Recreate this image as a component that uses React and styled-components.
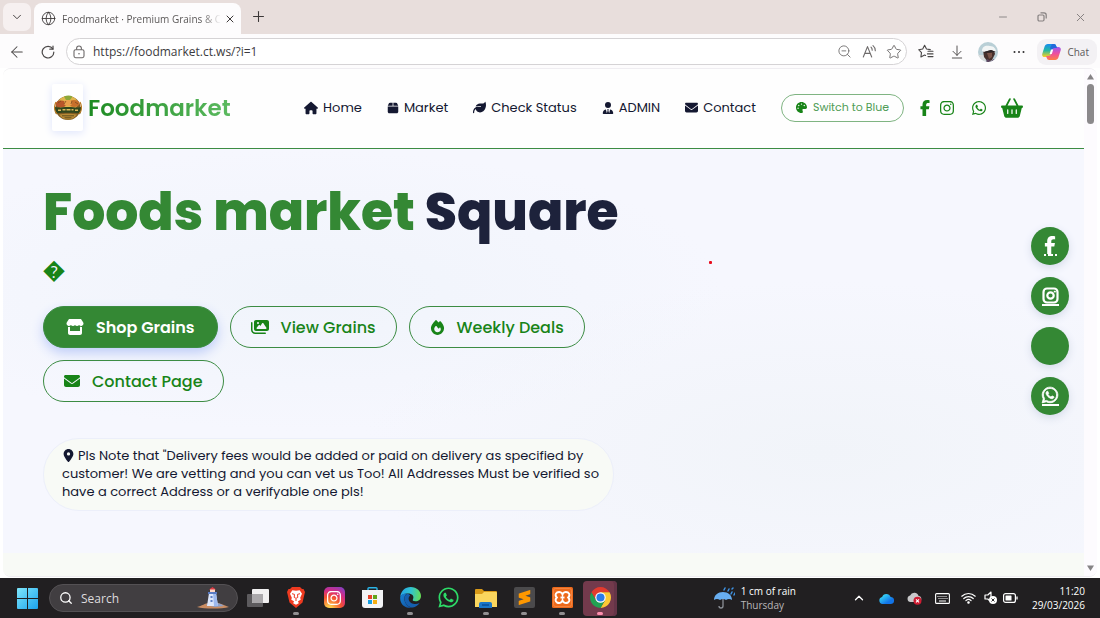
import React from "react";
import styled, { createGlobalStyle, css } from "styled-components";
import {
  FaHouse, FaBox, FaLeaf, FaUserTie, FaEnvelope, FaPalette, FaFacebookF, FaInstagram,
  FaWhatsapp, FaBasketShopping, FaStore, FaImages, FaFire, FaLocationDot,
} from "react-icons/fa6";
import { SiSublimetext } from "react-icons/si";
import { ArrowLeft, ChevronDown, ChevronUp, Globe, Minus, Plus, Star, X, ZoomOut, ArrowDownToLine, Search } from "lucide-react";

const green = "#348834";
const deepGreen = "#188418";
const ink = "#141831";
const siteFont = `Poppins, Inter, "Noto Sans", sans-serif`;
const systemFont = `"Segoe UI", "Open Sans", "Noto Sans", sans-serif`;

const GlobalStyle = createGlobalStyle`
  *, *::before, *::after { box-sizing: border-box; }
  body { margin: 0; background: #fff; font-family: ${systemFont}; }
  button, input { font: inherit; color: inherit; }
  button { border: 0; padding: 0; background: none; cursor: pointer; }
  a { color: inherit; text-decoration: none; }
  svg { display: block; flex: none; }
`;

const Desktop = styled.div`
  min-height: 100vh;
  display: flex;
  flex-direction: column;
`;

/* ---------- browser window ---------- */

const TabStrip = styled.header`
  height: 34px;
  display: flex;
  align-items: flex-end;
  background: #e8dedc;
  padding: 0 0 0 3px;
  color: #3c3838;
`;

const TabSearch = styled.button`
  width: 28px;
  height: 28px;
  margin-bottom: 3px;
  display: grid;
  place-items: center;
  border-radius: 7px;
  background: #f6f0f0;
`;

const Tab = styled.div`
  width: 207px;
  height: 31px;
  margin-left: 3px;
  padding: 0 8px 0 7px;
  display: flex;
  align-items: center;
  border-radius: 8px 8px 0 0;
  background: #fdfcfd;
`;

const TabTitle = styled.span`
  flex: 1;
  margin: 0 3px 0 6px;
  white-space: nowrap;
  font-size: 10px;
  line-height: 16px;
  color: #5c5959;
  mask-image: linear-gradient(90deg, #000 88%, transparent);
`;

const NewTab = styled.button`
  margin: 0 auto 9px 9px;
`;

const WindowControls = styled.div`
  display: flex;
  margin-bottom: 4px;
`;

const WindowButton = styled.button`
  width: 39px;
  height: 26px;
  display: grid;
  place-items: center;
  color: #858080;
`;

const Toolbar = styled.div`
  height: 34px;
  display: flex;
  align-items: center;
  padding: 1px 3px 0 5px;
  background: #fdfcfd;
  color: #4a4747;
`;

const ToolButton = styled.button`
  width: ${(p) => p.$w || 31}px;
  height: 26px;
  display: grid;
  place-items: center;
`;

const AddressField = styled.label`
  flex: 1;
  height: 27px;
  margin-right: 3px;
  padding: 0 0 0 5px;
  display: flex;
  align-items: center;
  border: 1px solid #d5d3d5;
  border-radius: 14px;
  background: #fff;
  color: #6d6a6a;
`;

const UrlInput = styled.input`
  flex: 1;
  min-width: 0;
  margin-left: 7px;
  padding: 0;
  border: 0;
  outline: 0;
  background: none;
  font-size: 12px;
  color: #3c3b40;
`;

const ChatButton = styled.button`
  height: 26px;
  margin-left: 3px;
  padding: 0 8px 0 5px;
  display: flex;
  align-items: center;
  gap: 6px;
  border-radius: 9px;
  background: #f3f1f4;
  font-size: 10px;
  color: #5b585b;
`;

const Viewport = styled.div`
  flex: 1;
  display: flex;
  margin: 0 3px 1px;
  border: solid #efedf1;
  border-width: 1px 0;
  border-radius: 8px;
  overflow: hidden;
  position: relative;
`;

const Page = styled.div`
  flex: 1;
  min-width: 0;
  display: flex;
  flex-direction: column;
  background: #f8faf6;
  font-family: ${siteFont};
`;

const Scrollbar = styled.div`
  width: 13px;
  padding: 5px 0;
  display: flex;
  flex-direction: column;
  align-items: center;
  background: #fdfbfe;
`;

const Thumb = styled.div`
  width: 7px;
  height: 40px;
  margin: 4px 0 auto;
  border-radius: 4px;
  background: #8b898b;
`;

/* ---------- site ---------- */

const SiteHeader = styled.header`
  height: 80px;
  display: flex;
  align-items: center;
  padding: 0 61px 2px 49px;
  background: #fefefe;
  border-bottom: 1px solid #3c8c43;
`;

const Brand = styled.a`
  display: flex;
  align-items: center;
  gap: 5px;
  margin-right: auto;
`;

const LogoCard = styled.span`
  width: 31px;
  height: 47px;
  display: grid;
  place-items: center;
  border-radius: 2px;
  background: #fff;
  box-shadow: 0 2px 8px #dfe5fc;
`;

const BrandName = styled.span`
  font-size: 23px;
  line-height: 32px;
  font-weight: 600;
  color: transparent;
  background: linear-gradient(90deg, #1d8a22, #5cba60);
  background-clip: text;
`;

const Nav = styled.nav`
  display: flex;
  gap: 25px;
  margin-right: 25px;
`;

const NavLink = styled.a`
  display: flex;
  align-items: center;
  gap: 5px;
  font-size: 13px;
  line-height: 20px;
  color: ${ink};
  white-space: nowrap;
`;

const ThemeButton = styled.button`
  width: 123px;
  height: 28px;
  display: flex;
  align-items: center;
  justify-content: center;
  gap: 6px;
  border: 1px solid #7fb482;
  border-radius: 14px;
  font-size: 11px;
  color: #4f9c56;
  white-space: nowrap;
  svg { color: ${deepGreen}; }
`;

const Shortcuts = styled.div`
  display: flex;
  align-items: center;
  margin-left: 13px;
  color: ${deepGreen};
`;

const ShortcutLink = styled.a`
  margin-left: ${(p) => p.$gap || 0}px;
`;

const Hero = styled.main`
  padding: 31px 40px 42px;
  background:
    radial-gradient(ellipse at 28% 35%, #f0f4fb 0, transparent 38%),
    radial-gradient(ellipse at 76% 75%, #f1f4f9 0, transparent 40%),
    #f6f7fe;
`;

const HeroColumn = styled.div`
  max-width: 571px;
`;

const Title = styled.h1`
  margin: 0;
  font-size: 52px;
  line-height: 64px;
  font-weight: 800;
  color: ${green};
  white-space: nowrap;
`;

const TitleInk = styled.span`
  color: #1d223b;
`;

const Tagline = styled.p`
  margin: 11px 0 19px;
  font-family: "Liberation Sans", sans-serif;
  font-size: 22px;
  font-weight: 700;
  line-height: 32px;
  color: ${deepGreen};
`;

const Actions = styled.div`
  display: flex;
  flex-wrap: wrap;
  gap: 12px;
`;

const ActionButton = styled.button`
  height: 42px;
  padding: 0 20px;
  display: flex;
  align-items: center;
  gap: 12px;
  border: 1px solid #3c8c43;
  border-radius: 21px;
  font-size: 16px;
  font-weight: 500;
  color: ${deepGreen};
  white-space: nowrap;
  ${(p) => p.$primary && css`
    padding: 0 22px;
    background: ${green};
    color: #fff;
    font-weight: 600;
    box-shadow: 0 5px 12px #bfcdf8;
  `}
`;

const Note = styled.p`
  margin: 36px 0 0;
  padding: 8px 18px 9px;
  border: 1px solid #eceffa;
  border-radius: 36px;
  background: #f8faf6;
  font-size: 13px;
  line-height: 18px;
  color: ${ink};
  white-space: nowrap;
  svg { display: inline-block; vertical-align: -2px; margin-right: 3px; }
`;

const SocialRail = styled.aside`
  position: absolute;
  top: 158px;
  right: 28px;
  display: flex;
  flex-direction: column;
  gap: 12px;
`;

const SocialButton = styled.a`
  width: 38px;
  height: 38px;
  display: flex;
  flex-direction: column;
  align-items: center;
  justify-content: center;
  border-radius: 50%;
  background: ${green};
  color: #fff;
  box-shadow: 0 3px 8px #d5dbea;
  &::after {
    content: "";
    width: ${(p) => (p.$empty ? 0 : p.$dotted ? 13 : 17)}px;
    height: 2px;
    background: ${(p) => (p.$dotted ? "linear-gradient(90deg, #fff 2px, transparent 2px 4px, #fff 4px 9px, transparent 9px 11px, #fff 11px)" : "#fff")};
  }
`;

const LaserDot = styled.span`
  position: absolute;
  top: 192px;
  left: 706px;
  width: 3px;
  height: 3px;
  border-radius: 1px;
  background: #e80c1c;
`;

/* ---------- taskbar ---------- */

const Taskbar = styled.footer`
  height: 40px;
  display: flex;
  align-items: center;
  padding: 0 15px 0 17px;
  background: #211f21;
  color: #fff;
`;

const SearchBox = styled.label`
  width: 189px;
  height: 28px;
  margin: 0 1px 0 11px;
  padding: 0 8px 0 9px;
  display: flex;
  align-items: center;
  gap: 8px;
  border: 1px solid #545154;
  border-radius: 14px;
  background: #413e41;
`;

const SearchInput = styled.input`
  flex: 1;
  min-width: 0;
  border: 0;
  padding: 0;
  outline: 0;
  background: none;
  font-size: 12px;
  &::placeholder { color: #dedcde; opacity: 1; }
`;

const TaskButton = styled.button`
  width: 34px;
  height: 35px;
  margin: 0 2px;
  padding-top: 3px;
  display: grid;
  grid-template-rows: 28px 3px;
  place-items: center;
  border-radius: 4px;
  background: ${(p) => (p.$active ? "#733a4c" : "none")};
  box-shadow: ${(p) => (p.$active ? "inset -3px 0 #643447" : "none")};
  &::after {
    content: "";
    width: 6px;
    height: 3px;
    border-radius: 2px;
    background: ${(p) => (p.$active ? "#ff8fae" : p.$running ? "#929092" : "transparent")};
  }
`;

const AppTile = styled.span`
  width: 21px;
  height: 21px;
  display: grid;
  place-items: center;
  border-radius: ${(p) => p.$radius || 2}px;
  background: ${(p) => p.$bg};
  color: ${(p) => p.$fg};
`;

const Weather = styled.button`
  display: flex;
  align-items: center;
  gap: 6px;
  margin: 0 49px 0 auto;
  text-align: left;
  font-size: 10px;
  line-height: 14px;
`;

const Dim = styled.span`
  color: #b9b7b9;
`;

const Tray = styled.div`
  display: flex;
  align-items: center;
`;

const TrayButton = styled.button`
  width: ${(p) => p.$w}px;
  height: 28px;
  display: grid;
  place-items: center;
`;

const Clock = styled.time`
  margin-left: 11px;
  text-align: right;
  font-size: 10px;
  line-height: 14px;
`;

/* ---------- drawings ---------- */

const ReloadIcon = () => (
  <svg width="14" height="14" viewBox="0 0 14 14" fill="none" stroke="currentColor" strokeWidth="1.2" strokeLinecap="round">
    <path d="M11.8 3.9A5.8 5.8 0 1 0 12.8 7" /><path d="M12 1v3.2H8.8" />
  </svg>
);

const LockIcon = () => (
  <svg width="14" height="14" viewBox="0 0 14 14" fill="none" stroke="currentColor" strokeWidth="1.1">
    <rect x="2" y="4.7" width="10" height="8" rx="1.6" />
    <path d="M4.6 4.7V3.4a2.4 2.4 0 0 1 4.8 0v1.3" />
    <circle cx="7" cy="8.8" r=".8" fill="currentColor" stroke="none" />
  </svg>
);

const ReadAloudIcon = () => (
  <svg width="15" height="15" viewBox="0 0 15 15" fill="none" stroke="currentColor" strokeWidth="1.1" strokeLinecap="round" strokeLinejoin="round">
    <path d="M1.3 13 5.5 2.6 9.7 13M2.8 9.4h5.4M9 3.2a4 4 0 0 1 1.2 3.1M11 1.6a6.4 6.4 0 0 1 2.3 5.2" />
  </svg>
);

const FavoritesIcon = () => (
  <svg width="16" height="15" viewBox="0 0 16 15" fill="none" stroke="currentColor" strokeWidth="1.1" strokeLinecap="round" strokeLinejoin="round">
    <path d="M12.3 5.6 8.5 5 6.6 1.3 4.7 5l-4 .7 2.8 3-.6 4.2 3.7-1.9 1 .5M10 7.2h5M9.4 9.9H15M10 12.6h5" />
  </svg>
);

const RestoreIcon = () => (
  <svg width="10" height="10" viewBox="0 0 10 10" fill="none" stroke="currentColor" strokeWidth="1.2">
    <rect x="1" y="3" width="6" height="6" rx="1.2" /><path d="M3.5.8H7A2.2 2.2 0 0 1 9.2 3v3.5" />
  </svg>
);

const DotsIcon = () => (
  <svg width="12" height="4" viewBox="0 0 12 4" fill="#302e30">
    <circle cx="1.5" cy="2" r="1" /><circle cx="6" cy="2" r="1" /><circle cx="10.500" cy="2" r="1" />
  </svg>
);

const Avatar = () => (
  <svg width="20" height="20" viewBox="0 0 20 20">
    <defs><clipPath id="face"><circle cx="10" cy="10" r="10" /></clipPath></defs>
    <g clipPath="url(#face)">
      <rect width="20" height="20" fill="#b9cfd6" />
      <path d="M0 13h6l2 7H0z" fill="#d9dcdc" />
      <path d="M5 8h11l1 4-3 6-4 2-4-5z" fill="#46302c" />
      <path d="M9 11h5v4l-3 2z" fill="#7a5348" />
      <path d="M4 9C4 4 8 3 12 4c4 0 6 3 6 6l-5-2-7 2z" fill="#f2f5f5" />
      <path d="M6 10l7-2 5 2-5 0-6 1z" fill="#2b2527" />
      <path d="M8 20l1-3 4 2 3-2 2 3z" fill="#5b4460" />
    </g>
  </svg>
);

const CopilotIcon = () => (
  <svg width="19" height="18" viewBox="0 0 19 18">
    <defs>
      <linearGradient id="coA" x1="0" y1="0" x2="0" y2="1"><stop stopColor="#168bf0" /><stop offset=".5" stopColor="#25b8a0" /><stop offset="1" stopColor="#ffd21c" /></linearGradient>
      <linearGradient id="coB" x1="0" y1="0" x2="0" y2="1"><stop stopColor="#9a58f2" /><stop offset=".5" stopColor="#ed4fa0" /><stop offset="1" stopColor="#ff7e45" /></linearGradient>
    </defs>
    <path d="M5.800 1h6c1.500 0 2 .8 2.400 2L15 5h-2.500c-1.300 0-2 .7-2.400 2L8.300 12.500C7.900 13.500 7.300 14 6.200 14H2.500C.8 14-.2 12.500.3 10.800l2.300-7.300C3.100 1.900 4.200 1 5.800 1Z" fill="url(#coA)" />
    <path d="M13.200 17h-6c-1.500 0-2-.8-2.400-2L4 13h2.500c1.300 0 2-.7 2.400-2l1.800-5.500C11.100 4.500 11.700 4 12.800 4h3.700c1.700 0 2.700 1.500 2.200 3.200l-2.300 7.300c-.5 1.600-1.600 2.500-3.200 2.500Z" fill="url(#coB)" />
    <path d="M10 1h1.800c1.500 0 2 .8 2.400 2L15 5h-2.500c-1.300 0-2 .7-2.400 2l-.4 1.200L8 5z" fill="#2169da" />
    <path d="M9 6.500h2.200L9.800 11H7.600z" fill="#fff" />
  </svg>
);

const FoodEmblem = () => (
  <svg width="28" height="26" viewBox="0 0 28 26">
    <ellipse cx="14" cy="13" rx="12.500" ry="12" fill="#7d5a23" />
    <ellipse cx="14" cy="8.500" rx="10" ry="7.500" fill="#e0b54c" />
    <path d="M10 1.500c3-1.500 6-1.500 8.500 0L16 5h-4z" fill="#8da83a" />
    <ellipse cx="7" cy="9" rx="5.500" ry="3.500" fill="#b8562a" />
    <ellipse cx="20" cy="8.500" rx="5.500" ry="3.500" fill="#c8702c" />
    <ellipse cx="14" cy="8" rx="4" ry="3" fill="#eaa04c" />
    <path d="M4 8l3-2M10 9l2-3M17 9l1-3M21 7l3 2" stroke="#7c4a1e" strokeWidth=".8" />
    <path d="M0 11.500c4 2 7 .5 14 .5s10 1.500 14-.5l-1.500 7c-5-1-8-.8-12.500-.8s-8-.2-12.500.8z" fill="#31461d" />
    <path d="M4 15.200h3M8.500 14.800h3M12.500 14.800h4M17.500 14.800h2M21 15.200h3" stroke="#d9b95b" strokeWidth="1.400" />
    <path d="M5 19.500c5-1 13-1 18 0-2 3-5 5-9 5s-7-2-9-5z" fill="#b98b36" />
    <path d="M8 20.800h12M10.500 22.800h7" stroke="#59491d" strokeWidth=".9" />
    <path d="M2 7c-2 4-2 9 1 12M26 7c2 4 2 9-1 12" stroke="#bd7d28" strokeWidth="1.300" fill="none" />
  </svg>
);

const WindowsIcon = () => (
  <svg width="21" height="21" viewBox="0 0 21 21">
    <defs><linearGradient id="win" x1="0" y1="0" x2="1" y2="1"><stop stopColor="#7fe6fb" /><stop offset="1" stopColor="#1ba3ee" /></linearGradient></defs>
    <path d="M0 1q0-1 1-1h9v10H0zM11 0h9q1 0 1 1v9H11zM0 11h10v10H1q-1 0-1-1zM11 11h10v9q0 1-1 1h-9z" fill="url(#win)" />
  </svg>
);

const Lighthouse = () => (
  <svg width="32" height="22" viewBox="0 0 32 22">
    <path d="M0 20c5-1 8-4 12-4h9c5 1 7 3 11 4-8 2-24 2-32 0z" fill="#c98c62" />
    <path d="M9 18c3-3 13-3 18 1l-9 1z" fill="#8da1c8" />
    <path d="M12 6h7l2 13H10z" fill="#dce7fb" /><path d="M16 6h3l2 13h-4z" fill="#9db9ee" />
    <path d="M11 5h9v2h-9z" fill="#5a7cc4" /><rect x="13" y="2" width="5" height="3" fill="#ffd7c4" />
    <path d="M12 2.500 15.500 0 19 2.500z" fill="#dd3c44" />
    <path d="M13.500 9h2v2h-2zM13.500 13h2v2h-2z" fill="#5d7fc4" />
  </svg>
);

const TaskViewIcon = () => (
  <svg width="22" height="20" viewBox="0 0 22 20">
    <rect x="0" y="6" width="16" height="13" rx="1" fill="#5d5b5e" />
    <rect x="5" y="1" width="17" height="14" rx="1" fill="#f1f0f1" />
    <path d="M5 6h11v9H6q-1 0-1-1z" fill="#aaa8ab" />
  </svg>
);

const BraveIcon = () => (
  <svg width="18" height="21" viewBox="0 0 18 21">
    <path d="M5 0h8l2 2h1.500L18 5l-.5 2-2 8.500L9 21l-6.500-5.500L.5 7 0 5l1.500-3H3z" fill="#ee3a20" />
    <path d="m9 3.800 3.700-.6L15 6.800l-1.800 4 .5 2-2.700 1.500.8 2L9 17.800l-2.800-1.500.8-2-2.700-1.500.5-2L3 6.800l2.300-3.600z" fill="#fff" />
    <path d="m5 6.700 2.500.7-.3 3 1.800 1 1.800-1-.3-3 2.500-.7M9 12v2" fill="none" stroke="#ee3a20" strokeWidth="1" />
  </svg>
);

const StoreIcon = () => (
  <svg width="21" height="21" viewBox="0 0 21 21">
    <path d="M6 4V1.500Q6 .7 7 .7h7q1 0 1 .8V4" fill="none" stroke="#2bb5e8" strokeWidth="1.400" />
    <path d="M0 3h21v15q0 3-3 3H3q-3 0-3-3z" fill="#f3f4f6" />
    <path d="M6 8h4v4H6z" fill="#e8442c" /><path d="M11 8h4v4h-4z" fill="#62a61c" />
    <path d="M6 13h4v4H6z" fill="#159fe2" /><path d="M11 13h4v4h-4z" fill="#f5ae13" />
  </svg>
);

const EdgeIcon = () => (
  <svg width="21" height="21" viewBox="0 0 21 21">
    <defs>
      <linearGradient id="edTop" x1="0" y1=".4" x2="1" y2=".5"><stop stopColor="#26a4e6" /><stop offset=".5" stopColor="#30c3d0" /><stop offset="1" stopColor="#66dc55" /></linearGradient>
      <linearGradient id="edLow" x1="0" y1="0" x2="1" y2="1"><stop stopColor="#1683d6" /><stop offset="1" stopColor="#124d9b" /></linearGradient>
    </defs>
    <path d="M.3 10C.8 4 5 0 10.700 0 17 0 21 4.500 21 9c0 3.500-2.600 5.300-5.500 5.300-2.400 0-3.300-1-2.500-2 1.500-3.500-1-5.800-5-5.800C4 6.500 1 8 .3 10z" fill="url(#edTop)" />
    <path d="M.2 10.500C.5 8 3.500 6.500 7 6.600c-2 1.200-3 3.500-2.500 6.400.7 4 3.800 6.900 7.500 7.700C5 21.800-.2 17 .2 10.500z" fill="url(#edLow)" />
    <path d="M6.800 7c-2.300 1.500-2.900 4-2 7 1.200 4 4.700 6.500 8 6.500 2.800-.6 5-2 6.800-4.500-4 2-10 .8-10.900-3.600-.3-1.700.3-3 1.500-4C9.400 7.300 8.200 6.900 6.800 7z" fill="#155faf" />
  </svg>
);

const FolderIcon = () => (
  <svg width="22" height="20" viewBox="0 0 22 20">
    <path d="M0 2q0-1 1-1h6l2 2h12q1 0 1 1v4H0z" fill="#d99a18" />
    <path d="M0 6h7l2-2h12q1 0 1 1v14H0z" fill="#fad65e" />
    <path d="M4 20v-4q0-2 2-2h9q2 0 2 2v4z" fill="#1b76c8" /><path d="M7 16h7v2H7z" fill="#0d58a3" />
  </svg>
);

const XamppIcon = () => (
  <svg width="21" height="21" viewBox="0 0 21 21">
    <rect width="21" height="21" rx="1.500" fill="#ed6a1c" />
    <rect x="1.500" y="1.500" width="18" height="18" rx="2" fill="none" stroke="#f58c48" strokeWidth=".8" />
    <path d="M5 5.500c3-1.200 5 .3 5.500 2 .5-1.700 2.500-3.200 5.500-2 2 1.200 1.700 3.500.2 5 1.500 1.500 1.800 3.800-.2 5-3 1.200-5-.3-5.500-2-.5 1.700-2.500 3.200-5.500 2-2-1.200-1.700-3.500-.2-5-1.500-1.500-1.800-3.800.2-5z" fill="none" stroke="#fff" strokeWidth="2" />
    <path d="M8.500 10.500h4" stroke="#fff" strokeWidth="2" />
  </svg>
);

const ChromeIcon = () => (
  <svg width="21" height="21" viewBox="2 2 44 44">
    <path d="M4.950 13A22 22 0 0 1 43.050 13L24 13 14.470 29.500Z" fill="#e33b2e" />
    <path d="M43.050 13A22 22 0 0 1 24 46L33.530 29.500 24 13Z" fill="#fcc934" />
    <path d="M24 46A22 22 0 0 1 4.950 13L14.470 29.500 33.530 29.500Z" fill="#22a153" />
    <circle cx="24" cy="24" r="11" fill="#fff" /><circle cx="24" cy="24" r="8.500" fill="#2b7bea" />
  </svg>
);

const UmbrellaIcon = () => (
  <svg width="21" height="22" viewBox="0 0 21 22">
    <path d="M9 9v10a2 2 0 0 1-4 0" fill="none" stroke="#8b8f96" strokeWidth="1.300" />
    <path d="M0 13c0-5 4-8 9-8s9 3 9 8c-2-1.300-4-1.300-6 0-2-1.300-4-1.300-6 0-2-1.300-4-1.300-6 0z" fill="#68aef0" />
    <path d="m10 3 1-2M14 4l1-2M18 2l1-1M17 7l1-2M20 8l1-2" stroke="#3e92e2" strokeWidth="1.500" strokeLinecap="round" />
  </svg>
);

const CloudIcon = () => (
  <svg width="15" height="11" viewBox="0 0 15 11">
    <defs><linearGradient id="cloud" x1="0" y1="0" x2="1" y2="1"><stop offset=".2" stopColor="#35d1f5" /><stop offset=".7" stopColor="#1274e8" /></linearGradient></defs>
    <path d="M3.500 11a3.500 3.500 0 0 1-.4-6.900A4.500 4.500 0 0 1 11.600 4 3.500 3.500 0 0 1 11.500 11z" fill="url(#cloud)" />
  </svg>
);

const CloudErrorIcon = () => (
  <svg width="15" height="13" viewBox="0 0 15 13">
    <path d="M3.500 10a3.300 3.300 0 0 1-.4-6.500A4.500 4.500 0 0 1 11.600 4 3 3 0 0 1 11 10z" fill="#c9c8ca" />
    <circle cx="10.500" cy="8.800" r="4" fill="#cf1c32" /><path d="m9 7.300 3 3m0-3-3 3" stroke="#fff" strokeWidth="1.100" />
  </svg>
);

const KeyboardIcon = () => (
  <svg width="15" height="11" viewBox="0 0 15 11" fill="none" stroke="#fff">
    <rect x=".6" y=".6" width="13.800" height="9.800" rx="1" strokeWidth="1.100" />
    <path d="M2.500 3.500h10M3.500 5.500h9" strokeDasharray="1 1" /><path d="M4 8h7" />
  </svg>
);

const WifiIcon = () => (
  <svg width="15" height="12" viewBox="0 0 15 12" fill="none" stroke="#fff" strokeWidth="1.200" strokeLinecap="round">
    <path d="M.8 4.200a9.600 9.600 0 0 1 13.400 0M2.800 6.500a6.800 6.800 0 0 1 9.400 0M4.900 8.600a3.800 3.800 0 0 1 5.200 0" /><circle cx="7.500" cy="10.500" r=".7" fill="#fff" />
  </svg>
);

const MutedIcon = () => (
  <svg width="14" height="14" viewBox="0 0 14 14" fill="none" stroke="#fff">
    <path d="M7 8.500V1L3.800 4H1v4h2.800L6 10" strokeWidth="1.200" strokeLinejoin="round" />
    <circle cx="9" cy="9" r="4" fill="#fff" stroke="none" /><path d="m7.500 7.500 3 3m0-3-3 3" stroke="#302e30" />
  </svg>
);

const BatteryIcon = () => (
  <svg width="15" height="10" viewBox="0 0 15 10">
    <rect x=".6" y=".6" width="11.800" height="8.800" rx="2" fill="none" stroke="#fff" strokeWidth="1.200" />
    <rect x="2.500" y="2.500" width="6" height="5" rx=".5" fill="#fff" /><path d="M14 3.500v3" stroke="#fff" strokeWidth="1.300" />
  </svg>
);

const InstagramGlyph = () => (
  <svg width="17" height="17" viewBox="0 0 17 17" fill="none" stroke="currentColor" strokeWidth="2.200">
    <rect x="1.500" y="1.500" width="14" height="14" rx="3.500" /><circle cx="8.500" cy="8.500" r="3.200" /><path d="M11.800 4.600h2" strokeWidth="1.600" />
  </svg>
);

const ArrowHead = ({ down }) => (
  <svg width="7" height="6" viewBox="0 0 7 6" fill="#858385">
    <path d={down ? "M0 .5h7L3.500 6z" : "M0 5.500h7L3.500 0z"} />
  </svg>
);

const navItems = [
  ["Home", FaHouse, 14],
  ["Market", FaBox, 12],
  ["Check Status", FaLeaf, 13],
  ["ADMIN", FaUserTie, 12],
  ["Contact", FaEnvelope, 13],
];

const actions = [
  ["Shop Grains", FaStore, 18, true],
  ["View Grains", FaImages, 18],
  ["Weekly Deals", FaFire, 15],
  ["Contact Page", FaEnvelope, 16],
];

export default function App() {
  return (
    <Desktop>
      <GlobalStyle />
      <TabStrip>
        <TabSearch aria-label="Search tabs"><ChevronDown size={14} strokeWidth={1.6} /></TabSearch>
        <Tab>
          <Globe size={15} strokeWidth={1.4} />
          <TabTitle>Foodmarket · Premium Grains &amp; C</TabTitle>
          <button aria-label="Close tab"><X size={12} strokeWidth={2} /></button>
        </Tab>
        <NewTab aria-label="New tab"><Plus size={17} strokeWidth={1.5} /></NewTab>
        <WindowControls>
          <WindowButton aria-label="Minimize"><Minus size={12} strokeWidth={1.8} /></WindowButton>
          <WindowButton aria-label="Restore"><RestoreIcon /></WindowButton>
          <WindowButton aria-label="Close"><X size={13} strokeWidth={1.8} /></WindowButton>
        </WindowControls>
      </TabStrip>
      <Toolbar>
        <ToolButton aria-label="Back" $w={24}><ArrowLeft size={18} strokeWidth={1.4} /></ToolButton>
        <ToolButton aria-label="Reload" $w={37}><ReloadIcon /></ToolButton>
        <AddressField>
          <LockIcon />
          <UrlInput aria-label="Address" defaultValue="https://foodmarket.ct.ws/?i=1" />
          <ToolButton aria-label="Zoom" $w={25}><ZoomOut size={15} strokeWidth={1.4} /></ToolButton>
          <ToolButton aria-label="Read aloud" $w={25}><ReadAloudIcon /></ToolButton>
          <ToolButton aria-label="Add to favorites" $w={24}><Star size={16} strokeWidth={1.4} /></ToolButton>
        </AddressField>
        <ToolButton aria-label="Favorites"><FavoritesIcon /></ToolButton>
        <ToolButton aria-label="Downloads"><ArrowDownToLine size={16} strokeWidth={1.4} /></ToolButton>
        <ToolButton aria-label="Profile"><Avatar /></ToolButton>
        <ToolButton aria-label="More"><DotsIcon /></ToolButton>
        <ChatButton><CopilotIcon />Chat</ChatButton>
      </Toolbar>

      <Viewport>
        <Page>
          <SiteHeader>
            <Brand href="#home">
              <LogoCard><FoodEmblem /></LogoCard>
              <BrandName>Foodmarket</BrandName>
            </Brand>
            <Nav>
              {navItems.map(([label, Icon, size]) => (
                <NavLink href={`#${label}`} key={label}><Icon size={size} />{label}</NavLink>
              ))}
            </Nav>
            <ThemeButton><FaPalette size={11} />Switch to Blue</ThemeButton>
            <Shortcuts>
              <ShortcutLink href="#facebook" aria-label="Facebook"><FaFacebookF size={16} /></ShortcutLink>
              <ShortcutLink href="#instagram" aria-label="Instagram" $gap={6}><FaInstagram size={16} /></ShortcutLink>
              <ShortcutLink href="#whatsapp" aria-label="WhatsApp" $gap={16}><FaWhatsapp size={16} /></ShortcutLink>
              <ShortcutLink href="#basket" aria-label="Basket" $gap={14}><FaBasketShopping size={22} /></ShortcutLink>
            </Shortcuts>
          </SiteHeader>
          <Hero>
            <HeroColumn>
              <Title>Foods market <TitleInk>Square</TitleInk></Title>
              <Tagline>{"\uFFFD"}</Tagline>
              <Actions>
                {actions.map(([label, Icon, size, primary]) => (
                  <ActionButton key={label} $primary={primary}><Icon size={size} />{label}</ActionButton>
                ))}
              </Actions>
              <Note>
                <FaLocationDot size={13} />Pls Note that "Delivery fees would be added or paid on delivery as specified by<br />
                customer! We are vetting and you can vet us Too! All Addresses Must be verified so<br />
                have a correct Address or a verifyable one pls!
              </Note>
            </HeroColumn>
          </Hero>
        </Page>
        <Scrollbar>
          <ArrowHead />
          <Thumb />
          <ArrowHead down />
        </Scrollbar>
        <SocialRail>
          <SocialButton href="#facebook" aria-label="Facebook" $dotted><FaFacebookF size={18} /></SocialButton>
          <SocialButton href="#instagram" aria-label="Instagram"><InstagramGlyph /></SocialButton>
          <SocialButton href="#more" aria-label="More" $empty />
          <SocialButton href="#whatsapp" aria-label="WhatsApp"><FaWhatsapp size={18} stroke="#fff" strokeWidth={22} /></SocialButton>
        </SocialRail>
        <LaserDot />
      </Viewport>

      <Taskbar>
        <button aria-label="Start"><WindowsIcon /></button>
        <SearchBox>
          <Search size={14} strokeWidth={2.2} />
          <SearchInput aria-label="Search" placeholder="Search" />
          <Lighthouse />
        </SearchBox>
        <TaskButton aria-label="Task view"><TaskViewIcon /></TaskButton>
        <TaskButton aria-label="Brave" $running><BraveIcon /></TaskButton>
        <TaskButton aria-label="Instagram">
          <AppTile $radius={5} $fg="#fff" $bg="radial-gradient(circle at 25% 105%, #fdc94a 10%, #f4522f 45%, #d52c83 68%, #6f45d6 100%)"><FaInstagram size={16} /></AppTile>
        </TaskButton>
        <TaskButton aria-label="Store"><StoreIcon /></TaskButton>
        <TaskButton aria-label="Edge" $running><EdgeIcon /></TaskButton>
        <TaskButton aria-label="WhatsApp"><FaWhatsapp size={23} color="#2ddb68" /></TaskButton>
        <TaskButton aria-label="Files" $running><FolderIcon /></TaskButton>
        <TaskButton aria-label="Sublime Text" $running><AppTile $bg="#4b4a4c" $fg="#ff9800"><SiSublimetext size={15} /></AppTile></TaskButton>
        <TaskButton aria-label="XAMPP" $running><XamppIcon /></TaskButton>
        <TaskButton aria-label="Chrome" $active><ChromeIcon /></TaskButton>
        <Weather><UmbrellaIcon /><span>1 cm of rain<br /><Dim>Thursday</Dim></span></Weather>
        <Tray>
          <TrayButton aria-label="Hidden icons" $w={28}><ChevronUp size={14} strokeWidth={2.2} /></TrayButton>
          <TrayButton aria-label="OneDrive" $w={28}><CloudIcon /></TrayButton>
          <TrayButton aria-label="OneDrive error" $w={28}><CloudErrorIcon /></TrayButton>
          <TrayButton aria-label="Keyboard" $w={28}><KeyboardIcon /></TrayButton>
          <TrayButton aria-label="Network" $w={24}><WifiIcon /></TrayButton>
          <TrayButton aria-label="Volume" $w={20}><MutedIcon /></TrayButton>
          <TrayButton aria-label="Battery" $w={20}><BatteryIcon /></TrayButton>
        </Tray>
        <Clock>11:20<br />29/03/2026</Clock>
      </Taskbar>
    </Desktop>
  );
}
